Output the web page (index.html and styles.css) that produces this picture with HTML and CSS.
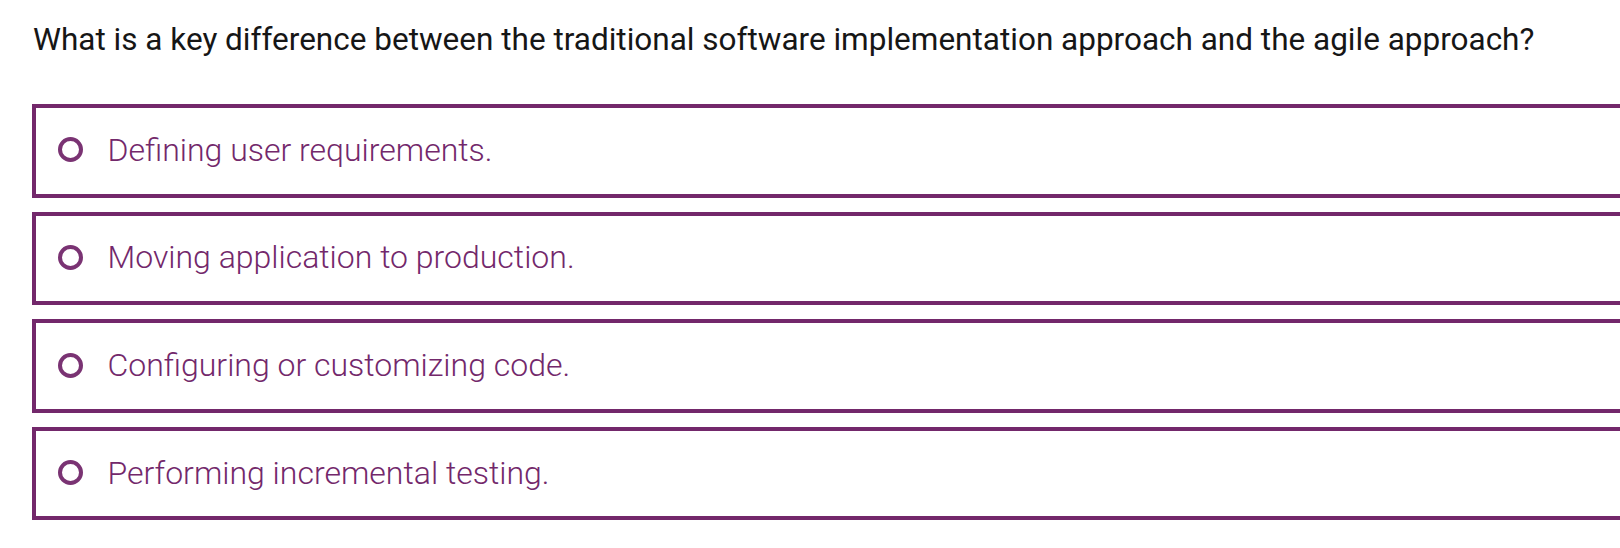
FILE: index.html
```html
<!DOCTYPE html>
<html lang="en">

<head>
    <meta charset="UTF-8">
    <meta name="viewport" content="width=device-width, initial-scale=1.0">
    <title>Quiz</title>
    <link rel="stylesheet" href="styles.css">
</head>

<body>
    <div id="quiz">
        <p class="question">What is a key difference between the traditional software implementation approach and the agile approach?</p>
        <ul class="answers">
            <li><span class="radio"></span><span class="label">Defining user requirements.</span></li>
            <li><span class="radio"></span><span class="label">Moving application to production.</span></li>
            <li><span class="radio"></span><span class="label">Configuring or customizing code.</span></li>
            <li><span class="radio"></span><span class="label">Performing incremental testing.</span></li>
        </ul>
    </div>
</body>

</html>
```

FILE: styles.css
```css
body {
    margin: 0;
    background-color: #fff;
    font-family: Roboto, "Liberation Sans", sans-serif;
    overflow: hidden;
}

#quiz {
    padding: 21px 0 0 32px;
}

.question {
    margin: 0 0 45px 1px;
    font-size: 31.5px;
    line-height: 38px;
    color: #161616;
    white-space: nowrap;
}

.answers {
    list-style: none;
    margin: 0;
    padding: 0;
    /* the boxes run past the right edge of the window */
    width: 1640px;
}

.answers li {
    display: flex;
    align-items: center;
    height: 93.5px;
    box-sizing: border-box;
    margin-bottom: 14.17px;
    padding: 0 0 2px 21.5px;
    border: 4px solid #73286b;
    color: #73286b;
}

.answers .radio {
    flex: none;
    width: 25px;
    height: 25px;
    box-sizing: border-box;
    border: 4.5px solid #7a3373;
    border-radius: 50%;
    margin-right: 25px;
    filter: blur(0.7px);
}

.answers .label {
    font-size: 32px;
    line-height: 36px;
    font-weight: 300;
}
```
